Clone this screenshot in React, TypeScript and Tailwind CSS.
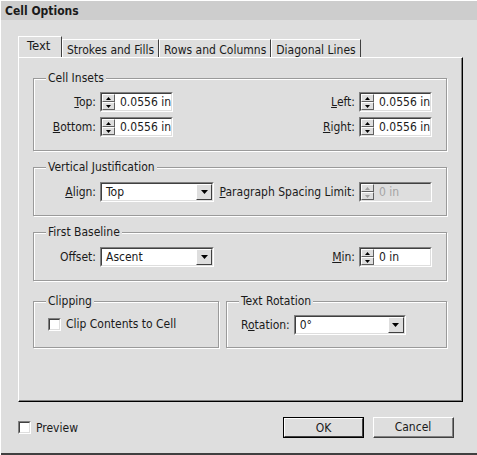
import React from "react";

const FONT = "font-['DejaVu_Sans_Condensed','Liberation_Sans',sans-serif]";

function Arrow({ dir, disabled }: { dir: "up" | "down"; disabled?: boolean }) {
  const fill = disabled ? "#a0a0a0" : "#000";
  return (
    <svg width="5" height="3" viewBox="0 0 5 3" className="block">
      {dir === "up" ? (
        <polygon points="0,3 5,3 2.5,0" fill={fill} />
      ) : (
        <polygon points="0,0 5,0 2.5,3" fill={fill} />
      )}
    </svg>
  );
}

function Sunken({ className = "", children }: { className?: string; children: React.ReactNode }) {
  return (
    <div className={`border border-t-[#808080] border-l-[#808080] border-r-white border-b-white ${className}`}>
      <div className="flex h-full w-full border border-t-[#404040] border-l-[#404040] border-r-[#dedede] border-b-[#dedede]">
        {children}
      </div>
    </div>
  );
}

function Spinner({ value, disabled }: { value: string; disabled?: boolean }) {
  return (
    <Sunken className="h-[20px] w-[73px] shrink-0">
      <div className="flex w-[13px] flex-col bg-[#dedede]">
        {(["up", "down"] as const).map((d) => (
          <div
            key={d}
            className="flex h-[8px] items-center justify-center border border-t-white border-l-white border-r-[#606060] border-b-[#606060]"
          >
            <Arrow dir={d} disabled={disabled} />
          </div>
        ))}
      </div>
      <div
        className={`flex-1 overflow-hidden whitespace-nowrap pl-[5px] leading-[16px] ${
          disabled ? "bg-[#dedede] text-[#a4a4a4]" : "bg-white"
        }`}
      >
        {value}
      </div>
    </Sunken>
  );
}

function Dropdown({ value, width }: { value: string; width: string }) {
  return (
    <Sunken className={`h-[20px] shrink-0 ${width}`}>
      <div className="flex-1 bg-white pl-[4px] leading-[16px]">{value}</div>
      <div className="flex w-[16px] items-center justify-center border border-t-white border-l-white border-r-[#404040] border-b-[#404040] bg-[#dedede]">
        <svg width="7" height="4" viewBox="0 0 7 4" className="block">
          <polygon points="0,0 7,0 3.5,4" fill="#000" />
        </svg>
      </div>
    </Sunken>
  );
}

function Group({
  title,
  className = "",
  children,
}: {
  title: string;
  className?: string;
  children: React.ReactNode;
}) {
  return (
    <div
      className={`relative border border-[#9a9a9a] shadow-[inset_1px_1px_0_#fff,1px_1px_0_#fff] ${className}`}
    >
      <span className="absolute left-[12px] top-[-9px] bg-[#dedede] px-[2px] leading-[16px]">
        {title}
      </span>
      {children}
    </div>
  );
}

function Label({ children, className = "" }: { children: React.ReactNode; className?: string }) {
  return <span className={`whitespace-nowrap text-right ${className}`}>{children}</span>;
}

function Check() {
  return (
    <div className="h-[13px] w-[13px] shrink-0 border border-t-[#808080] border-l-[#808080] border-r-white border-b-white">
      <div className="h-full w-full border border-t-[#404040] border-l-[#404040] border-r-[#dedede] border-b-[#dedede] bg-white" />
    </div>
  );
}

const TABS = ["Strokes and Fills", "Rows and Columns", "Diagonal Lines"];

export default function App() {
  return (
    <div
      className={`flex h-[455px] w-[477px] flex-col bg-[#dedede] text-[12px] text-[#1a1a1a] ${FONT} border-l border-l-white`}
    >
      <div className="flex h-[20px] items-center border-t border-t-white bg-[#cdcdcd] pl-[4px] text-[12px] font-bold">
        Cell Options
      </div>

      <div className="ml-[17px] mt-[17px] flex h-[20px] items-end">
        <div className="relative z-10 flex h-[21px] w-[44px] items-center border-l border-t border-r border-l-white border-t-white border-r-[#404040] bg-[#dedede] pl-[8px] pb-[2px] text-[13px]">
          Text
        </div>
        {TABS.map((t) => (
          <div
            key={t}
            className="flex h-[18px] items-center border-l border-t border-r border-l-white border-t-white border-r-[#404040] px-[4px] pt-[2px] whitespace-nowrap"
          >
            {t}
          </div>
        ))}
      </div>

      <div className="ml-[17px] flex h-[345px] w-[445px] flex-col border border-l-white border-t-white border-r-[#000] border-b-[#000]">
        <div className="flex h-full w-full flex-col border-r border-b border-r-[#808080] border-b-[#808080] pl-[14px] pt-[20px]">
          <Group title="Cell Insets" className="w-[414px] pt-[13px] pb-[13px]">
            <div className="flex flex-col gap-[5px]">
              {[
                ["T", "op:", "L", "eft:"],
                ["B", "ottom:", "R", "ight:"],
              ].map(([a, b, c, d]) => (
                <div key={a} className="flex items-center justify-between pr-[14px]">
                  <div className="flex items-center gap-[4px]">
                    <Label className="w-[62px]">
                      <u>{a}</u>
                      {b}
                    </Label>
                    <Spinner value="0.0556 in" />
                  </div>
                  <div className="flex items-center gap-[4px]">
                    <Label>
                      <u>{c}</u>
                      {d}
                    </Label>
                    <Spinner value="0.0556 in" />
                  </div>
                </div>
              ))}
            </div>
          </Group>

          <Group title="Vertical Justification" className="mt-[16px] w-[414px] pt-[14px] pb-[13px]">
            <div className="flex items-center justify-between pr-[14px]">
              <div className="flex items-center gap-[4px]">
                <Label className="w-[62px]">
                  <u>A</u>lign:
                </Label>
                <Dropdown value="Top" width="w-[114px]" />
              </div>
              <div className="flex items-center gap-[4px]">
                <Label>
                  <u>P</u>aragraph Spacing Limit:
                </Label>
                <Spinner value="0 in" disabled />
              </div>
            </div>
          </Group>

          <Group title="First Baseline" className="mt-[16px] w-[414px] pt-[14px] pb-[13px]">
            <div className="flex items-center justify-between pr-[14px]">
              <div className="flex items-center gap-[4px]">
                <Label className="w-[62px]">Offset:</Label>
                <Dropdown value="Ascent" width="w-[114px]" />
              </div>
              <div className="flex items-center gap-[4px]">
                <Label>
                  <u>M</u>in:
                </Label>
                <Spinner value="0 in" />
              </div>
            </div>
          </Group>

          <div className="mt-[20px] flex w-[414px] gap-[7px]">
            <Group title="Clipping" className="w-[186px] pt-[12px] pb-[13px]">
              <div className="flex h-[20px] items-center gap-[5px] pl-[14px]">
                <Check />
                <span>Clip Contents to Cell</span>
              </div>
            </Group>
            <Group title="Text Rotation" className="flex-1 pt-[13px] pb-[12px]">
              <div className="flex items-center gap-[4px] pl-[14px]">
                <Label>
                  R<u>o</u>tation:
                </Label>
                <Dropdown value="0°" width="w-[112px]" />
              </div>
            </Group>
          </div>
        </div>
      </div>

      <div className="mt-[15px] flex items-center justify-between pl-[17px] pr-[23px]">
        <div className="flex items-center gap-[5px]">
          <Check />
          <span>Preview</span>
        </div>
        <div className="flex gap-[9px]">
          <div className="h-[21px] w-[81px] border border-black">
            <div className="flex h-full w-full items-center justify-center border border-t-white border-l-white border-r-[#404040] border-b-[#404040]">
              OK
            </div>
          </div>
          <div className="flex h-[21px] w-[81px] items-center justify-center border border-t-white border-l-white border-r-[#404040] border-b-[#404040]">
            <div className="flex h-full w-full items-center justify-center border-r border-b border-r-[#808080] border-b-[#808080]">
              Cancel
            </div>
          </div>
        </div>
      </div>

      <div className="flex-1" />
      <div className="h-[2px] bg-[#404040]" />
    </div>
  );
}
